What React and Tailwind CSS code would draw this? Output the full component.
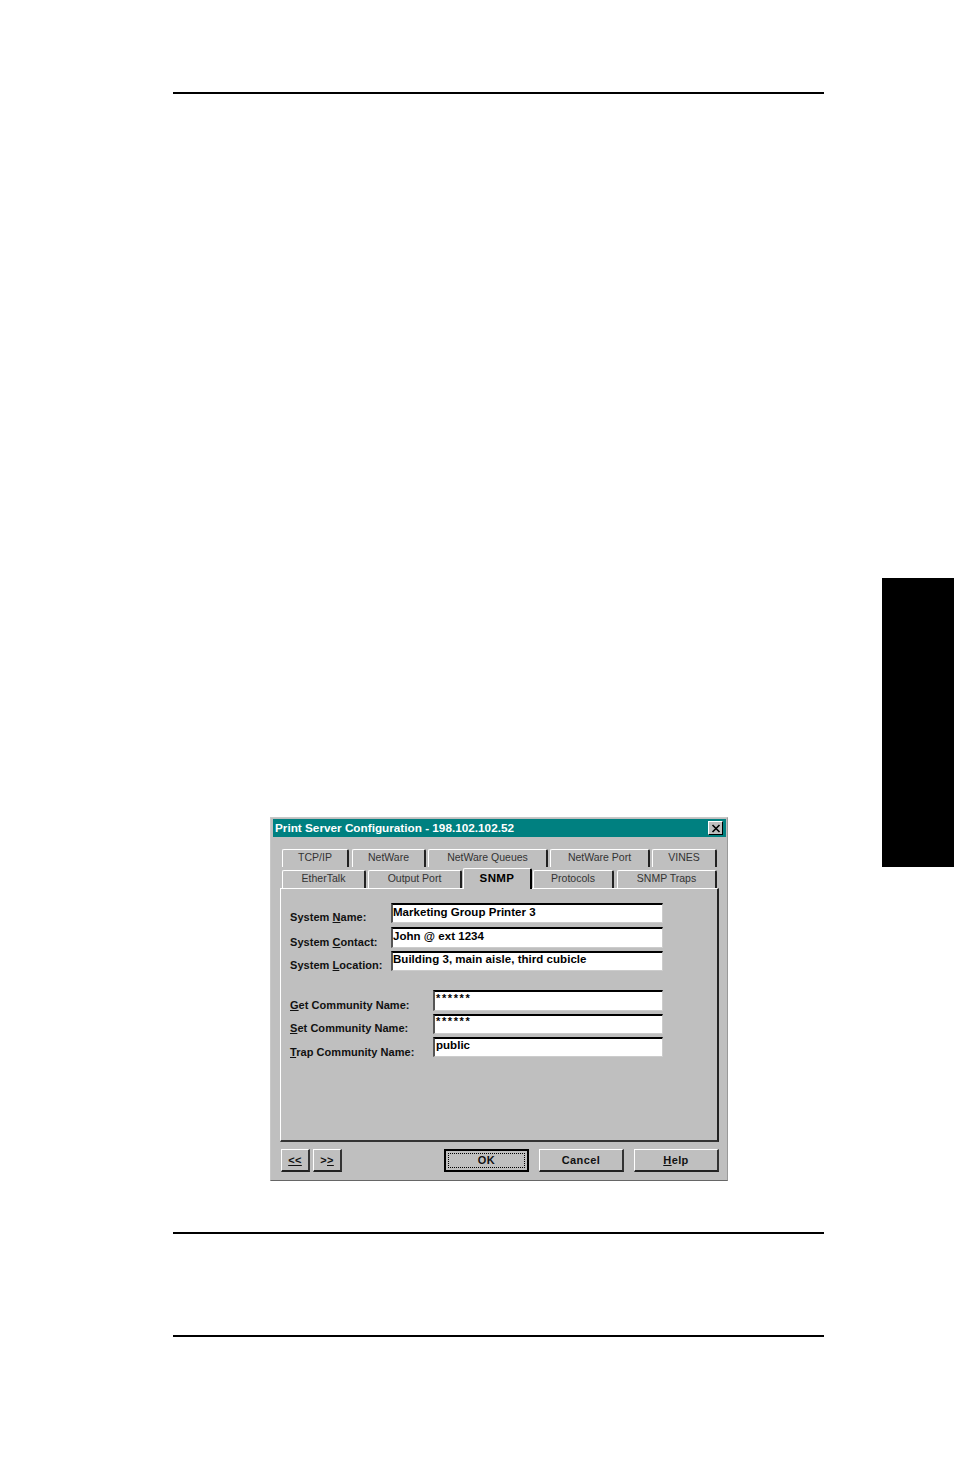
import React from 'react';

const font = "font-['Liberation_Sans',Arial,sans-serif]";

function Tab({ label, className = '', active = false }) {
  return (
    <div
      className={`flex items-center justify-center bg-[#bfbfbf] border-t border-l border-white rounded-tl-[2px] rounded-tr-[2px] ${
        active
          ? 'h-[21px] border-r-2 border-r-black text-[11.5px] font-bold tracking-[0.4px] text-black relative z-10 -mb-px'
          : 'h-[18px] pb-px border-r-2 border-r-[#222] text-[10.5px] text-[#333]'
      } ${className}`}
    >
      {label}
    </div>
  );
}

function Field({
  label,
  value,
  labelClass = 'w-[101px] pt-[7px]',
  inputClass = 'w-[272px]',
  textClass = 'leading-[15px] tracking-[0.03px] text-[11.5px]',
  className = '',
  h = 'h-[20px]',
}) {
  return (
    <div className={`flex items-start ${h} ${className}`}>
      <div className={`${labelClass} leading-[16px] text-[11px] font-bold tracking-[0.05px] text-[#111] whitespace-nowrap`}>
        {label}
      </div>
      <div
        className={`${inputClass} ${textClass} h-full bg-white border-t-2 border-l-2 border-t-black border-l-[#555] border-r border-b border-r-[#ccc] border-b-[#ccc] font-bold text-black whitespace-nowrap`}
      >
        {value}
      </div>
    </div>
  );
}

function Btn({ children, className = '' }) {
  return (
    <div className={`h-[23px] flex items-center justify-center bg-[#bfbfbf] border-t border-l border-white border-r-2 border-b-2 border-r-[#333] border-b-[#222] text-[11px] font-bold tracking-[0.4px] text-[#111] ${className}`}>
      {children}
    </div>
  );
}

export default function App() {
  return (
    <div className={`${font} relative w-[954px] h-[1475px] bg-white overflow-hidden pt-[92px] pl-[173px]`}>
      {/* black thumb tab on the page edge */}
      <div className="absolute left-[882px] top-[578px] w-[72px] h-[289px] bg-black" />

      <div className="w-[651px] h-[2px] bg-black" />

      <div className="ml-[97px] mt-[723px] w-[458px] h-[364px] bg-[#bfbfbf] border border-[#c8c8c8] border-r-[#999] border-b-[#666] pt-px pl-[2px] pr-px">
        <div className="w-[453px] h-[18px] bg-[#008080] flex items-center justify-between pl-[2px] pr-[3px] text-white">
          <span className="text-[11.75px] font-bold whitespace-nowrap">Print Server Configuration - 198.102.102.52</span>
          <div className="w-[15px] h-[14px] bg-[#bfbfbf] border-t border-l border-white border-r border-b border-r-black border-b-black flex items-center justify-center">
            <svg width="10" height="9" viewBox="0 0 10 9">
              <path d="M1.5 1 L8.5 8 M8.5 1 L1.5 8" stroke="#000" strokeWidth="1.6" fill="none" />
            </svg>
          </div>
        </div>

        <div className="flex mt-[12px] ml-[9px]">
          <Tab label="TCP/IP" className="w-[67px]" />
          <Tab label="NetWare" className="w-[74px] ml-[3px]" />
          <Tab label="NetWare Queues" className="w-[120px] ml-[2px]" />
          <Tab label="NetWare Port" className="w-[100px] ml-[2px]" />
          <Tab label="VINES" className="w-[65px] ml-[2px]" />
        </div>

        <div className="flex items-end ml-[9px] h-[21px]">
          <Tab label="EtherTalk" className="w-[84px]" />
          <Tab label="Output Port" className="w-[94px] ml-[2px]" />
          <Tab label="SNMP" active className="w-[69px] ml-[1px]" />
          <Tab label="Protocols" className="w-[81px] ml-px" />
          <Tab label="SNMP Traps" className="w-[100px] ml-[3px]" />
        </div>

        <div className="ml-[7px] w-[439px] h-[254px] border-t border-l border-white border-r-2 border-b-2 border-r-[#222] border-b-[#333] pt-[14px] pl-[9px]">
          <Field labelClass="w-[101px] pt-[6px]" label={<>System <u>N</u>ame:</>} value="Marketing Group Printer 3" />
          <Field className="mt-[4px]" h="h-[21px]" label={<>System <u>C</u>ontact:</>} value="John @ ext 1234" />
          <Field
            className="mt-[3px]"
            labelClass="w-[101px] pt-[6px]"
            textClass="leading-[13px] tracking-[0.03px] text-[11.5px]"
            label={<>System <u>L</u>ocation:</>}
            value="Building 3, main aisle, third cubicle"
          />

          <Field
            className="mt-[19px]"
            h="h-[21px]"
            labelClass="w-[143px] pt-[7px]"
            inputClass="w-[230px]"
            textClass="leading-[12px] tracking-[1.6px] text-[11px] pl-[1px]"
            label={<><u>G</u>et Community Name:</>}
            value="******"
          />
          <Field
            className="mt-[3px]"
            labelClass="w-[143px] pt-[6px]"
            inputClass="w-[230px]"
            textClass="leading-[11px] tracking-[1.6px] text-[11px] pl-[1px]"
            label={<><u>S</u>et Community Name:</>}
            value="******"
          />
          <Field
            className="mt-[3px]"
            labelClass="w-[143px] pt-[7px]"
            inputClass="w-[230px]"
            textClass="leading-[13px] tracking-[0.03px] text-[11.5px] pl-[1px]"
            label={<><u>T</u>rap Community Name:</>}
            value="public"
          />
        </div>

        <div className="flex mt-[7px] ml-[8px]">
          <Btn className="w-[29px]"><u>&lt;&lt;</u></Btn>
          <Btn className="w-[29px] ml-[3px]">&gt;<u>&gt;</u></Btn>
          <div className="w-[85px] h-[23px] ml-[102px] bg-[#bfbfbf] border-2 border-black p-[2px]">
            <div className="w-full h-full border border-dotted border-black flex items-center justify-center text-[11px] font-bold tracking-[0.4px] text-[#111]">OK</div>
          </div>
          <Btn className="w-[85px] ml-[10px]">Cancel</Btn>
          <Btn className="w-[85px] ml-[10px]"><span><u>H</u>elp</span></Btn>
        </div>
      </div>

      <div className="w-[651px] h-[2px] bg-black mt-[51px]" />
      <div className="w-[651px] h-[2px] bg-black mt-[101px]" />
    </div>
  );
}
